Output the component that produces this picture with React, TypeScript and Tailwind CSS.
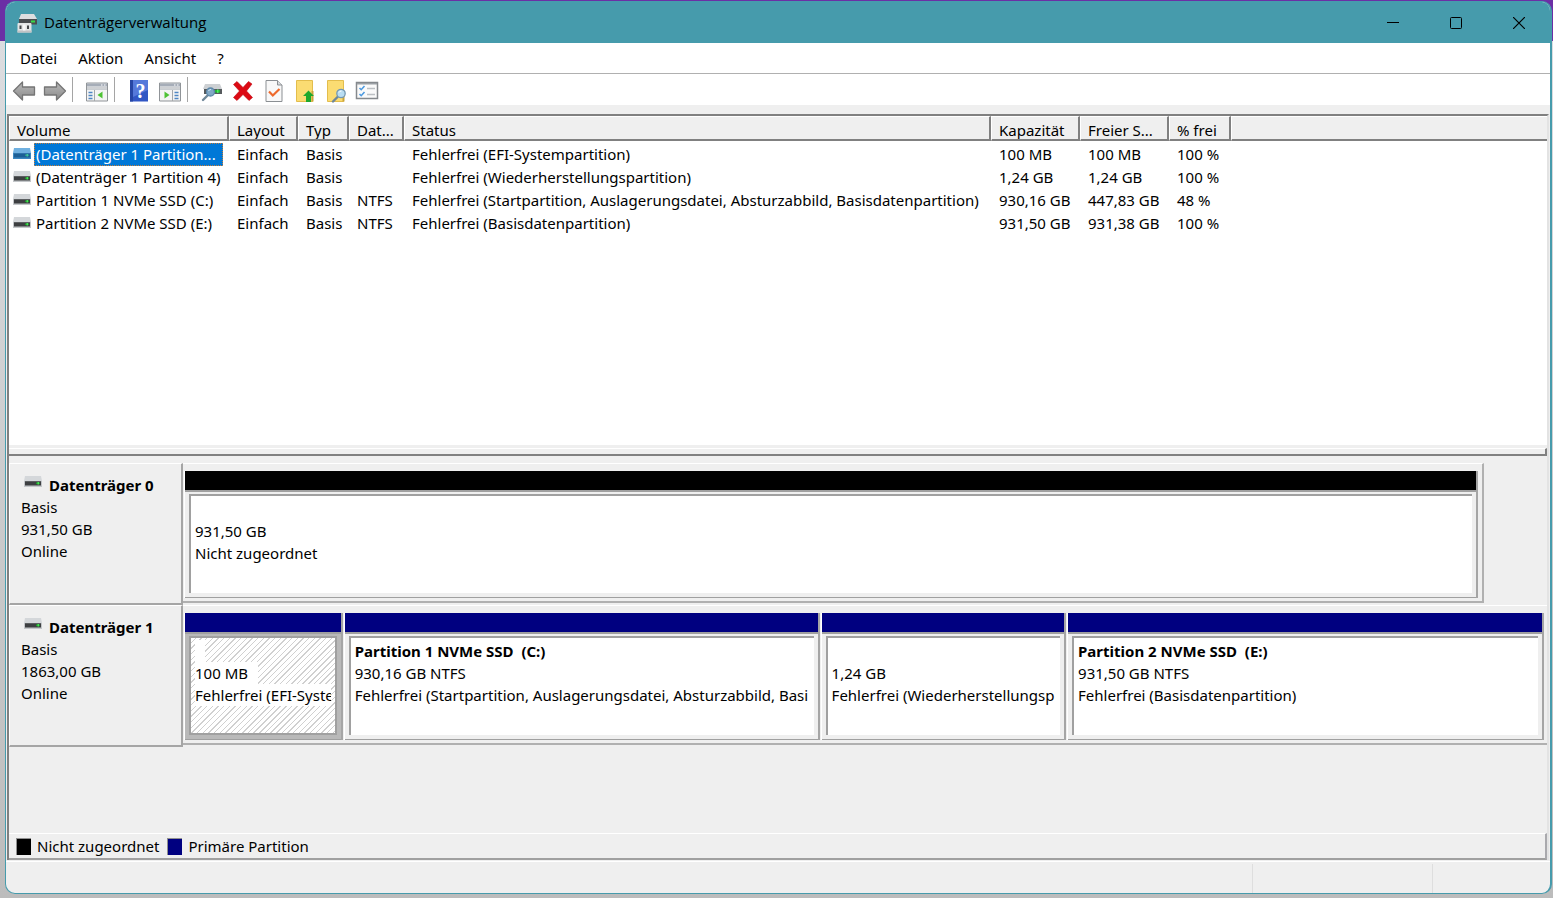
import { useState } from 'react';
import type { ReactNode } from 'react';
import clsx from 'clsx';

interface Volume {
  name: string;
  layout: string;
  type: string;
  fs: string;
  status: string;
  capacity: string;
  free: string;
  percent: string;
}

interface Partition {
  label: string;
  size: string;
  status: string;
  primary: boolean;
  selected?: boolean;
}

interface Disk {
  name: string;
  size: string;
  graph: string;
  columns: string;
  partitions: Partition[];
}

const COLUMNS = [
  { title: 'Volume', width: 'w-[220px]' },
  { title: 'Layout', width: 'w-[69px]' },
  { title: 'Typ', width: 'w-[51px]' },
  { title: 'Dat...', width: 'w-[55px]' },
  { title: 'Status', width: 'w-[587px]' },
  { title: 'Kapazität', width: 'w-[89px]' },
  { title: 'Freier S...', width: 'w-[89px]' },
  { title: '% frei', width: 'w-[62px]' },
];

const VOLUMES: Volume[] = [
  { name: '(Datenträger 1 Partition...', layout: 'Einfach', type: 'Basis', fs: '', status: 'Fehlerfrei (EFI-Systempartition)', capacity: '100 MB', free: '100 MB', percent: '100 %' },
  { name: '(Datenträger 1 Partition 4)', layout: 'Einfach', type: 'Basis', fs: '', status: 'Fehlerfrei (Wiederherstellungspartition)', capacity: '1,24 GB', free: '1,24 GB', percent: '100 %' },
  { name: 'Partition 1 NVMe SSD (C:)', layout: 'Einfach', type: 'Basis', fs: 'NTFS', status: 'Fehlerfrei (Startpartition, Auslagerungsdatei, Absturzabbild, Basisdatenpartition)', capacity: '930,16 GB', free: '447,83 GB', percent: '48 %' },
  { name: 'Partition 2 NVMe SSD (E:)', layout: 'Einfach', type: 'Basis', fs: 'NTFS', status: 'Fehlerfrei (Basisdatenpartition)', capacity: '931,50 GB', free: '931,38 GB', percent: '100 %' },
];

const DISKS: Disk[] = [
  {
    name: 'Datenträger 0',
    size: '931,50 GB',
    graph: 'w-[95.4%] border-r-2',
    columns: 'grid-cols-1 pr-[4px]',
    partitions: [{ label: '', size: '931,50 GB', status: 'Nicht zugeordnet', primary: false }],
  },
  {
    name: 'Datenträger 1',
    size: '1863,00 GB',
    graph: 'w-full',
    columns: 'grid-cols-[159fr_477fr_246fr_478fr] pr-[3px]',
    partitions: [
      { label: '', size: '100 MB', status: 'Fehlerfrei (EFI-Syste', primary: true, selected: true },
      { label: 'Partition 1 NVMe SSD  (C:)', size: '930,16 GB NTFS', status: 'Fehlerfrei (Startpartition, Auslagerungsdatei, Absturzabbild, Basi', primary: true },
      { label: '', size: '1,24 GB', status: 'Fehlerfrei (Wiederherstellungsp', primary: true },
      { label: 'Partition 2 NVMe SSD  (E:)', size: '931,50 GB NTFS', status: 'Fehlerfrei (Basisdatenpartition)', primary: true },
    ],
  },
];

function DriveIcon({ active = false }: { active?: boolean }) {
  return (
    <svg width="20" height="12" viewBox="0 0 20 12" className="shrink-0" aria-hidden="true">
      <path d="M2 0h16l1 5H1z" fill={active ? '#6fb0e0' : '#d4d7da'} />
      <path d="M1 5h18v6H1z" fill={active ? '#3a86c0' : '#c3c6c9'} />
      <path d="M2 5h16v4.5H2z" fill={active ? '#1c5f96' : '#3d3f41'} />
      <path d="M2 5h16v1H2z" fill={active ? '#2f74aa' : '#5c5f61'} />
      <path d="M13 6.500h4v1.600h-4z" fill={active ? '#2c9c86' : '#1f9a2c'} />
      <path d="M14.500 6h1.500v2.500h-1.500z" fill={active ? '#3fc4a0' : '#45e052'} />
    </svg>
  );
}

function AppIcon() {
  return (
    <svg width="20" height="20" viewBox="0 0 20 20" className="shrink-0" aria-hidden="true">
      <path d="M4 1h13l3 5H2z" fill="#dcdee0" />
      <path d="M2 6h18v5.500H2z" fill="#4a4d50" />
      <path d="M14 7.500h4v2h-4z" fill="#38d848" />
      <path d="M1.500 10h12a1 1 0 0 1 1 1v8.500H.5V11a1 1 0 0 1 1-1z" fill="#e3e5e6" />
      <path d="M.5 17.500h14v2H.5z" fill="#c0c2c4" />
      <path d="M2.500 12.500h2v3.500h-2zM10 12.500h2V16h-2z" fill="#45484b" />
      <path d="M6 11.500h2.500v6H6z" fill="#f8f8f8" />
    </svg>
  );
}

function Icon({ children }: { children: ReactNode }) {
  return (
    <svg width="24" height="24" viewBox="0 0 24 24" aria-hidden="true">
      {children}
    </svg>
  );
}

function ArrowIcon({ forward = false }: { forward?: boolean }) {
  return (
    <Icon>
      <defs>
        <linearGradient id={forward ? 'fwd' : 'back'} x1="0" y1="0" x2="0" y2="1">
          <stop offset="0" stopColor="#b8b8b8" />
          <stop offset="0.500" stopColor="#a2a2a2" />
          <stop offset="1" stopColor="#8a8a8a" />
        </linearGradient>
      </defs>
      <path
        d={forward ? 'M22.500 12 13.500 3v5h-12v8h12v5z' : 'M1.500 12l9-9v5h12v8h-12v5z'}
        fill={forward ? 'url(#fwd)' : 'url(#back)'}
        stroke="#757575"
        strokeWidth="1.300"
        strokeLinejoin="round"
      />
    </Icon>
  );
}

function PaneIcon({ right = false }: { right?: boolean }) {
  const listX = right ? 16.5 : 3.5;
  return (
    <Icon>
      <path d="M1.500 4h21v18h-21z" fill="#f4f4f4" stroke="#909498" />
      <path d="M2 4.500h20v3H2z" fill="#a6adb8" />
      <path d="M16 6h1.500M19 6h1.500" stroke="#fff" />
      <path d="M2 9h20" stroke="#a8adb3" />
      <path d={right ? 'M14.500 11v11' : 'M9.500 11v11'} stroke="#a4a8ac" />
      <path d="M2 10.500h20" stroke="#c9cdd1" />
      {[13, 16, 19].map((y) => (
        <path key={y} d={`M${listX} ${y + 0.5}h4`} stroke="#4f86c4" strokeWidth="1.500" />
      ))}
      <path d={right ? 'M6.500 12.500v7l5-3.500z' : 'M17.500 12.500v7l-5-3.500z'} fill="#4ec234" />
    </Icon>
  );
}

function HelpIcon() {
  return (
    <Icon>
      <path d="M3 1h18v21.500H3z" fill="#3156c4" />
      <path d="M3 1h3v21.500H3z" fill="#2746a4" />
      <path d="M6 1h15v10L6 18z" fill="#5579da" />
      <text x="13.500" y="18.500" textAnchor="middle" fill="#fff" fontSize="20" fontWeight="bold" fontFamily="Liberation Serif, serif">?</text>
    </Icon>
  );
}

function Lens({ x, y }: { x: number; y: number }) {
  return (
    <>
      <path d={`M${x - 3} ${y + 3}l-5 5`} stroke="#6f8798" strokeWidth="2.400" strokeLinecap="round" />
      <circle cx={x} cy={y} r="4.200" fill="#b9ddf2" stroke="#7498b2" strokeWidth="1.300" />
      <path d={`M${x - 2} ${y - 1}a2.500 2.500 0 0 1 2.500-1.500`} fill="none" stroke="#fff" />
    </>
  );
}

function DiskSearchIcon() {
  return (
    <Icon>
      <path d="M5 5h15l2 5H3z" fill="#cdd0d3" />
      <path d="M4 10h18v5H4z" fill="#565a5d" />
      <path d="M15 11h5v2.500h-5z" fill="#22b934" />
      <path d="M17 10.500h1.500v3.500H17z" fill="#4ff060" />
      <path d="M8 16l-5 5" stroke="#6f8798" strokeWidth="2.400" strokeLinecap="round" />
      <circle cx="10.500" cy="13" r="4" fill="#82a9c6" stroke="#5d87a8" strokeWidth="1.300" />
      <path d="M8.500 12a2.500 2.500 0 0 1 2.500-1.500" fill="none" stroke="#d8ecf8" />
    </Icon>
  );
}

function DeleteIcon() {
  return (
    <Icon>
      <path
        d="M2.500 5.500 6 2.500l6 6 5.500-6 3.500 2.500-5.500 7 6 6.500-3.500 3-6-6-6 6-3.500-3 6-6.500z"
        fill="#dc0a14"
        stroke="#c00710"
        strokeWidth="0.600"
      />
    </Icon>
  );
}

function CheckDocIcon() {
  return (
    <Icon>
      <path d="M4 1.500h11.500l4.500 4.500v16.500H4z" fill="#f8f8f8" stroke="#8b8f93" />
      <path d="M15.500 1.500V6H20" fill="#d8dadc" stroke="#8b8f93" />
      <path d="m7 12.500 3.800 4L17.500 10" fill="none" stroke="#ee6a2c" strokeWidth="2.200" />
    </Icon>
  );
}

function FolderIcon({ search = false }: { search?: boolean }) {
  return (
    <Icon>
      <path d="M3.500 1.500h16v21h-16z" fill="#fbdc72" stroke="#e3bd4c" />
      <path d="M19.500 12v10.500" stroke="#caa43a" strokeWidth="2" />
      {search ? <Lens x={17} y={14.5} /> : <path d="M15.500 11.500 21 17h-3v6h-5v-6h-3z" fill="#1fa82c" />}
    </Icon>
  );
}

function ChecklistIcon() {
  return (
    <Icon>
      <path d="M1.500 3.500h21v16h-21z" fill="#fafafa" stroke="#85898d" strokeWidth="1.500" />
      <path d="M2 4h20v1.500H2z" fill="#9a9fa4" />
      <path d="m4.500 9 1.700 1.700L9.500 7M4.500 15l1.700 1.700L9.500 13" fill="none" stroke="#4e9be0" strokeWidth="1.600" />
      <path d="M12 9.500h8M12 15.500h8" stroke="#bcc0c4" strokeWidth="1.500" />
    </Icon>
  );
}

function ToolButton({ label, children }: { label: string; children: ReactNode }) {
  return (
    <button type="button" aria-label={label} className="flex h-full w-[31px] items-center justify-center pt-[2px] hover:bg-sky-100">
      {children}
    </button>
  );
}

function Separator() {
  return (
    <div className="flex h-full w-[11px] py-[3px] pl-[2px]">
      <div className="border-l border-[#a5a5a5]" />
    </div>
  );
}

function TitleBar() {
  return (
    <header className="flex h-[41px] shrink-0 items-center bg-[#469bac] pl-[11px]">
      <AppIcon />
      <h1 className="flex-1 pl-[7px] font-['Open_Sans',sans-serif] text-[15px]">Datenträgerverwaltung</h1>
      <button type="button" aria-label="Minimieren" className="flex h-full w-[63px] items-center justify-center hover:bg-white/20">
        <svg width="12" height="12" viewBox="0 0 12 12"><path d="M0 5.500h12" stroke="#000" /></svg>
      </button>
      <button type="button" aria-label="Maximieren" className="flex h-full w-[63px] items-center justify-center hover:bg-white/20">
        <svg width="12" height="12" viewBox="0 0 12 12"><rect x="0.500" y="0.500" width="11" height="11" rx="1" fill="none" stroke="#000" /></svg>
      </button>
      <button type="button" aria-label="Schließen" className="flex h-full w-[63px] items-center justify-center hover:bg-red-600">
        <svg width="12" height="12" viewBox="0 0 12 12"><path d="m0 0 12 12M12 0 0 12" stroke="#000" strokeWidth="1.200" /></svg>
      </button>
    </header>
  );
}

function Toolbar() {
  return (
    <div role="toolbar" aria-label="Werkzeuge" className="flex h-[31px] shrink-0 items-center bg-white pl-[2px]">
      <ToolButton label="Zurück"><ArrowIcon /></ToolButton>
      <ToolButton label="Vorwärts"><ArrowIcon forward /></ToolButton>
      <Separator />
      <ToolButton label="Konsolenstruktur"><PaneIcon /></ToolButton>
      <Separator />
      <ToolButton label="Hilfe"><HelpIcon /></ToolButton>
      <ToolButton label="Aktionsbereich"><PaneIcon right /></ToolButton>
      <Separator />
      <ToolButton label="Datenträger neu einlesen"><DiskSearchIcon /></ToolButton>
      <ToolButton label="Löschen"><DeleteIcon /></ToolButton>
      <ToolButton label="Eigenschaften"><CheckDocIcon /></ToolButton>
      <ToolButton label="Öffnen"><FolderIcon /></ToolButton>
      <ToolButton label="Durchsuchen"><FolderIcon search /></ToolButton>
      <ToolButton label="Einstellungen"><ChecklistIcon /></ToolButton>
    </div>
  );
}

function VolumeTable() {
  const [selected, setSelected] = useState(0);

  return (
    <table className="w-full table-fixed border-separate border-spacing-0 text-left">
      <thead>
        <tr>
          {COLUMNS.map((col) => (
            <th
              key={col.title}
              scope="col"
              className={clsx(
                'h-[25px] overflow-hidden border-t border-r-2 border-b-2 border-l border-t-white border-r-[#808080] border-b-[#808080] border-l-white bg-[#efefef] pt-[4px] pl-[7px] font-normal leading-[18px] whitespace-nowrap',
                col.width,
              )}
            >
              {col.title}
            </th>
          ))}
          <td className="border-t border-b-2 border-l border-t-white border-b-[#808080] border-l-white bg-[#efefef]" />
        </tr>
      </thead>
      <tbody>
        <tr className="h-[2px]" />
        {VOLUMES.map((v, i) => (
          <tr key={v.name} onClick={() => setSelected(i)} className="h-[23px] whitespace-nowrap">
            <td className="p-0">
              <div className="flex items-start pl-[3px]">
                <span className="pt-[5px] pr-[2px]"><DriveIcon active={selected === i} /></span>
                <span
                  className={clsx(
                    'h-[23px] pr-[7px] pl-[2px] leading-[23px]',
                    selected === i && 'bg-[#0078d7] text-white outline-1 -outline-offset-1 outline-dotted outline-[#c87f3a]',
                  )}
                >
                  {v.name}
                </span>
              </div>
            </td>
            <td className="pl-[8px]">{v.layout}</td>
            <td className="pl-[8px]">{v.type}</td>
            <td className="pl-[8px]">{v.fs}</td>
            <td className="pl-[8px]">{v.status}</td>
            <td className="pl-[8px]">{v.capacity}</td>
            <td className="pl-[8px]">{v.free}</td>
            <td className="pl-[8px]">{v.percent}</td>
            <td />
          </tr>
        ))}
      </tbody>
    </table>
  );
}

function PartitionBox({ part }: { part: Partition }) {
  return (
    <div className="flex min-w-0 flex-col border-r-2 border-l border-r-[#a5a5a5] border-l-white">
      <div className={clsx('h-[20px] border-b border-[#a0a0a0]', part.primary ? 'bg-[#000080]' : 'bg-black')} />
      <div
        className={clsx(
          'flex-1 border-y border-[#a0a0a0] px-[4px] pt-[2px] pb-[4px]',
          part.selected ? 'bg-[#b9b9b9]' : 'bg-[#efefef]',
        )}
      >
        <div
          className={clsx(
            'h-full border-t-2 border-l-2 border-[#a0a0a0] px-[4px] pt-[2px]',
            part.selected
              ? 'border-r-2 border-b-2 bg-[repeating-linear-gradient(135deg,#fff_0px,#fff_3px,#d0d0d0_3px,#d0d0d0_4px)]'
              : 'bg-white',
          )}
        >
          <div className="overflow-hidden whitespace-pre leading-[22px]">
            <p className="h-[22px] font-bold">
              <span className={clsx('inline-block h-[22px]', part.selected && 'w-[10px] bg-white')}>{part.label}</span>
            </p>
            <p className="h-[22px]">
              <span className={clsx('inline-block', part.selected && 'bg-white pr-[10px]')}>{part.size}</span>
            </p>
            <p className={clsx('h-[22px] overflow-hidden', part.selected && 'bg-white')}>{part.status}</p>
          </div>
        </div>
      </div>
    </div>
  );
}

function DiskRow({ disk }: { disk: Disk }) {
  return (
    <section className="flex h-[142px]">
      <div className="w-[174px] shrink-0 border-t border-r-2 border-b-2 border-l border-t-white border-r-[#a5a5a5] border-b-[#a5a5a5] border-l-white pt-[10px] pl-[11px] leading-[22px]">
        <h2 className="flex font-bold">
          <span className="pt-[2px] pr-[6px] pl-[2px]"><DriveIcon /></span>
          {disk.name}
        </h2>
        <p>Basis</p>
        <p>{disk.size}</p>
        <p>Online</p>
      </div>
      <div className="min-w-0 flex-1 pb-[2px]">
        <div className={clsx('h-full border-t border-b-2 border-t-white border-r-[#b0b0b0] border-b-[#b0b0b0] pt-[7px] pb-[3px] pl-px', disk.graph)}>
          <div className={clsx('grid h-full gap-px', disk.columns)}>
            {disk.partitions.map((p, i) => (
              <PartitionBox key={i} part={p} />
            ))}
          </div>
        </div>
      </div>
    </section>
  );
}

export default function App() {
  return (
    <div className="flex h-screen flex-col bg-[linear-gradient(to_bottom,#6b2fa5_0px,#6b2fa5_41px,#dcdde0_41px,#bcbcbc_100%)] pt-px pr-px pb-[4px] pl-[5px] font-['Noto_Sans','Open_Sans',sans-serif] text-[15px] text-black">
      <div className="flex min-h-0 flex-1 flex-col overflow-hidden rounded-[10px] border border-r-2 border-[#469bac] bg-[#efefef]">
        <TitleBar />
        <nav className="flex h-[31px] shrink-0 items-center gap-[21px] border-b border-[#b0b0b0] bg-white pl-[14px]">
          <button type="button">Datei</button>
          <button type="button">Aktion</button>
          <button type="button">Ansicht</button>
          <button type="button">?</button>
        </nav>
        <Toolbar />

        <main className="mx-px mt-[9px] flex min-h-0 flex-1 flex-col border-t-2 border-r-2 border-l-2 border-t-[#808080] border-r-[#e3e3e3] border-l-[#808080]">
          <div className="min-h-0 flex-[332] overflow-hidden bg-white">
            <VolumeTable />
          </div>
          <div className="shrink-0 bg-[#efefef] pt-[3px]">
            <div className="h-[8px] border-t border-r-2 border-b-2 border-t-white border-r-[#808080] border-b-[#808080]" />
          </div>
          <div className="min-h-0 flex-[374] overflow-hidden pt-[7px]">
            {DISKS.map((d) => (
              <DiskRow key={d.name} disk={d} />
            ))}
          </div>
          <footer className="flex h-[27px] shrink-0 items-center border-t border-r-2 border-b-2 border-t-white border-r-[#a9a9ad] border-b-[#a0a0a0] pl-[7px]">
            <span className="h-[17px] w-[15px] border-t border-l border-[#909090] bg-black" />
            <span className="pr-[8px] pl-[6px]">Nicht zugeordnet</span>
            <span className="h-[17px] w-[15px] border-t border-l border-[#909090] bg-[#000080]" />
            <span className="pl-[6px]">Primäre Partition</span>
          </footer>
        </main>
        <div className="mt-px flex h-[32px] shrink-0 border-t border-white pt-[2px]">
          <div className="flex-1" />
          <div className="w-[180px] border-l border-[#dedede]" />
          <div className="w-[118px] border-l border-[#dedede]" />
        </div>
      </div>
    </div>
  );
}
